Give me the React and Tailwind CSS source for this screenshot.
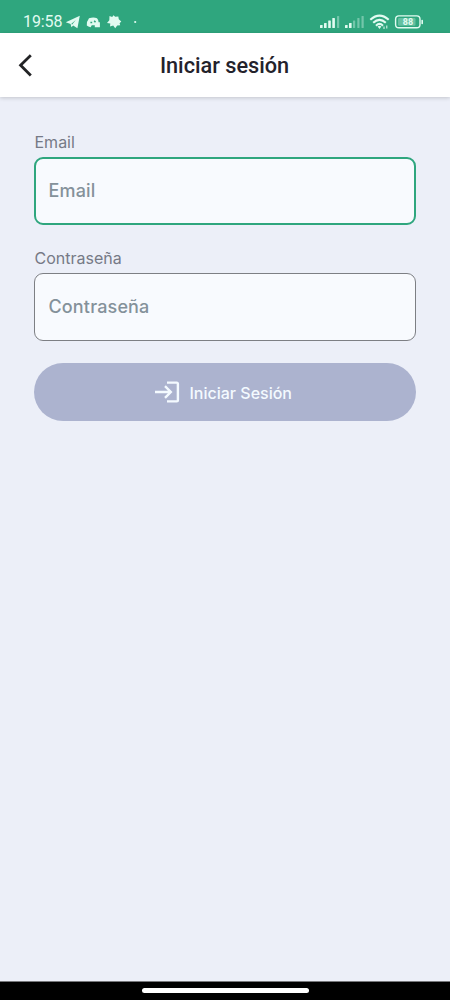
import React, { useState } from "react";

function StatusBar() {
  return (
    <div className="h-[33px] shrink-0 bg-[#2fa67e] text-[#e2fbf1]">
      <div className="flex h-full items-start justify-between pl-[23px] pr-[25px]">
        <div className="flex items-center pt-[12px]">
          <span className="w-[39px] font-['Roboto',sans-serif] text-[16px] leading-[20px] tracking-[-0.1px] whitespace-nowrap">
            19:58
          </span>

          {/* Notifications */}
          <svg className="ml-[3px]" width="75" height="20" viewBox="0 0 75 20" fill="currentColor">
            <path d="M.8 10.2 14.8 3.8 12.4 16.2 8.2 13.5 6.4 15.3 5.6 11.9Z" />
            <path d="M6.2 11.9 10.8 8 7.2 12.6Z" fill="#2fa67e" />
            <path d="M24 6.3Q28.5 4.6 32 6.3Q33.5 8 33.6 10.2H34.9V15.2H29.8V13.3H26.8L25.6 15.2Q23.2 14.8 21.8 13.5Q21.6 9.2 24 6.3Z" />
            <path d="M25.4 10.4h1.8M29.2 8.8l1.3 1.5" stroke="#2fa67e" strokeWidth="1.5" />
            <path d="M44.5 4 47.2 5 48.5 3.3 50.2 4.7 53.3 4.5 53.8 7.2 56.3 9.5 54.6 11.3 55.2 13.3 52.2 13.6 50.2 16.2 48.2 13.6 45 14.6 45.3 11.6 42 11 44.3 8.3Z" />
            <circle cx="70.2" cy="10" r="1.1" />
          </svg>
        </div>

        <svg className="mt-[12px]" width="106" height="20" viewBox="0 0 106 20" fill="currentColor">
          {/* SIM 1 */}
          <rect x="1" y="13" width="2.6" height="3" rx=".5" />
          <rect x="5" y="11" width="2.6" height="5" rx=".5" />
          <rect x="9.2" y="8.5" width="2.6" height="7.5" rx=".5" />
          <rect x="13.3" y="6" width="2.6" height="10" rx=".5" />
          <rect x="18" y="4" width="2.2" height="12" rx=".5" opacity=".38" />
          {/* SIM 2 */}
          <rect x="26" y="13" width="2.6" height="3" rx=".5" />
          <rect x="30" y="11" width="2.6" height="5" rx=".5" />
          <rect x="34" y="8.5" width="2.2" height="7.5" rx=".5" opacity=".38" />
          <rect x="38.3" y="6" width="2.2" height="10" rx=".5" opacity=".38" />
          <rect x="42.5" y="4" width="2.2" height="12" rx=".5" opacity=".38" />
          {/* Wifi */}
          <g fill="none" stroke="currentColor" strokeWidth="2.1">
            <path d="M51.3 7.7Q60.5-.5 69.7 7.7" />
            <path d="M54.2 10.8Q60.5 5 66.8 10.8" />
            <path d="M57 13.7Q60.5 10.2 64 13.7" />
          </g>
          <path d="M58.6 14.6Q60.5 12.8 62.4 14.6L60.5 17Z" />
          <path d="M65 14.5v2.5M67.8 13.5v3" stroke="currentColor" strokeWidth="1" />
          {/* Battery */}
          <rect x="76.6" y="3.9" width="24.4" height="11.8" rx="3.3" fill="none" stroke="currentColor" strokeWidth="1.4" />
          <rect x="79" y="6" width="17.5" height="7.7" rx="1.2" opacity=".3" />
          <rect x="102.4" y="7.7" width="1.6" height="4.5" rx=".8" />
          <text x="89" y="13" textAnchor="middle" className="font-['Roboto',sans-serif] text-[9px] font-bold">
            88
          </text>
        </svg>
      </div>
    </div>
  );
}

function Header() {
  return (
    <header className="z-10 grid h-[64px] shrink-0 grid-cols-[64px_1fr_64px] items-center bg-white shadow-[0_1px_4px_rgba(0,0,0,0.18)]">
      <button className="pl-[17px]" aria-label="Volver">
        <svg width="18" height="24" viewBox="0 0 18 24" fill="none" stroke="#222325" strokeWidth="2.8">
          <path d="M13.8 2.3 3.6 12.2 13.8 22.6" />
        </svg>
      </button>
      <h1 className="pt-[2px] pr-px text-center font-['Roboto',sans-serif] text-[21.7px] leading-[28px] font-medium text-[#23222b]">
        Iniciar sesión
      </h1>
    </header>
  );
}

function Field({ label, type, value, onChange, active }) {
  return (
    <label className="block">
      <span className="block h-[22px] pl-[0.5px] text-[16px] leading-[22px] text-[#767a86]">{label}</span>
      <input
        type={type}
        value={value}
        onChange={onChange}
        placeholder={label}
        className={`mt-[4px] block h-[68px] w-full rounded-[9px] bg-[#f8fafe] pb-[2px] text-[18px] font-medium tracking-[0.15px] text-[#23222b] outline-none placeholder:text-[#84919a] ${
          active ? "border-2 border-[#2fa67e] px-[12.5px]" : "border border-[#7d7f84] px-[13.5px]"
        }`}
      />
    </label>
  );
}

export default function App() {
  const [email, setEmail] = useState("");
  const [password, setPassword] = useState("");

  return (
    <div className="flex h-[1000px] w-[450px] flex-col overflow-hidden bg-[#eceff8] font-['Inter',sans-serif]">
      <StatusBar />
      <Header />

      <main className="flex-1 px-[34px] pt-[34px]">
        <form className="flex flex-col gap-[22px]" onSubmit={(e) => e.preventDefault()}>
          <Field label="Email" type="email" value={email} onChange={(e) => setEmail(e.target.value)} active />
          <Field label="Contraseña" type="password" value={password} onChange={(e) => setPassword(e.target.value)} />
          <button
            type="submit"
            className="flex h-[58px] items-center justify-center gap-[9.5px] rounded-full bg-[#acb3cf] pr-[3px] text-[16px] font-medium text-[#f4faff]"
          >
            <svg width="25" height="22" viewBox="0 0 25 22" fill="none" stroke="currentColor" strokeWidth="2.4">
              <path d="M12 1.6h9.6q1.3 0 1.3 1.3v16.2q0 1.3-1.3 1.3H12" />
              <path d="M0 11h15.5M10 5.2 15.8 11l-5.8 5.8" />
            </svg>
            <span className="pt-px">Iniciar Sesión</span>
          </button>
        </form>
      </main>

      {/* Gesture bar */}
      <div className="flex h-[19px] shrink-0 items-start justify-center border-t border-[#77787b] bg-black pt-[6px]">
        <div className="h-[5px] w-[167px] rounded-full bg-white" />
      </div>
    </div>
  );
}
